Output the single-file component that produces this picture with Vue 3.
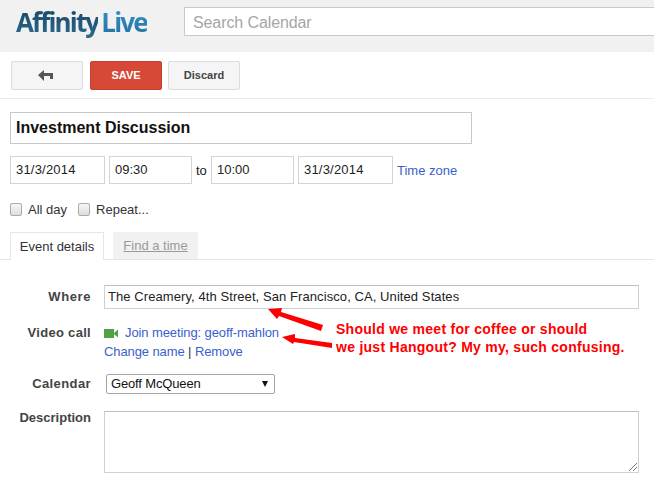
<script setup>
const dates = [
  { cls: 'w95', text: '31/3/2014' },
  { cls: 'w83', text: '09:30' }
]
const dates2 = [
  { cls: 'w83', text: '10:00' },
  { cls: 'w95', text: '31/3/2014' }
]
</script>

<template>
  <div class="page">
    <header class="top">
      <div class="logo"><span class="aff">Affinity</span><span class="live">Live</span></div>
      <div class="search">Search Calendar</div>
    </header>

    <div class="toolbar">
      <button class="btn back" aria-label="Back">
        <svg width="15" height="11" viewBox="0 0 15 11"><path d="M0 5 L6 0 V3 H15 V9 H12 V6 H6 V11 Z" fill="#555" /></svg>
      </button>
      <button class="btn save">SAVE</button>
      <button class="btn discard">Discard</button>
    </div>

    <div class="main">
      <div class="title">Investment Discussion</div>

      <div class="when">
        <div v-for="d in dates" :key="d.text" class="field" :class="d.cls">{{ d.text }}</div>
        <span class="to">to</span>
        <div v-for="d in dates2" :key="d.text" class="field" :class="d.cls">{{ d.text }}</div>
        <a class="link tz">Time zone</a>
      </div>

      <div class="checks">
        <label class="check"><span class="box"></span>All day</label>
        <label class="check"><span class="box"></span>Repeat...</label>
      </div>

      <div class="tabs">
        <div class="tab active">Event details</div>
        <div class="tab idle">Find a time</div>
      </div>

      <div class="form">
        <div class="row where">
          <div class="label">Where</div>
          <div class="field wide">The Creamery, 4th Street, San Francisco, CA, United States</div>
        </div>
        <div class="row video">
          <div class="label">Video call</div>
          <div class="video-info">
            <div class="join">
              <svg width="15" height="9" viewBox="0 0 15 9"><rect x="0" y="0" width="10" height="9" fill="#4fa345" /><path d="M10 4 L14 0.5 V8.5 L10 5 Z" fill="#4fa345" /></svg>
              <a class="link">Join meeting: geoff-mahlon</a>
            </div>
            <div class="manage"><a class="link">Change name</a> | <a class="link">Remove</a></div>
          </div>
        </div>
        <div class="row cal">
          <div class="label">Calendar</div>
          <div class="select"><span>Geoff McQueen</span><i class="caret"></i></div>
        </div>
        <div class="row desc">
          <div class="label">Description</div>
          <div class="area">
            <svg class="grip" width="8" height="8" viewBox="0 0 8 8"><path d="M0 8 L8 0 M4 8 L8 4" stroke="#777" stroke-width="1" /></svg>
          </div>
        </div>
      </div>
    </div>

    <svg class="arrows" width="654" height="486" viewBox="0 0 654 486">
      <path d="M268 309 L282 308 L281 312 L323 325 L321 331 L279 316 L277 319 Z" fill="#fe0000" />
      <path d="M282 337 L295 334 L295 338 L332 343 L332 348 L294 342 L293 344 Z" fill="#fe0000" />
    </svg>
    <div class="note">Should we meet for coffee or should<br />we just Hangout? My my, such confusing.</div>
  </div>
</template>

<style>
html, body { margin: 0; padding: 0; background: #fff; }
</style>

<style scoped>
.page {
  position: relative;
  width: 654px;
  height: 486px;
  overflow: hidden;
  background: #fff;
  font-family: "Liberation Sans", Arial, sans-serif;
  font-size: 13px;
  color: #222;
}
.top {
  height: 52px;
  background: #f1f1f1;
  display: flex;
  align-items: flex-start;
  box-sizing: border-box;
  padding: 7px 0 0 16px;
}
.logo {
  width: 168px;
  margin-top: -2px;
  font-family: "Open Sans", sans-serif;
  font-weight: 700;
  font-size: 26px;
  line-height: 34px;
  letter-spacing: -1.85px;
}
.aff {
  margin-right: 3px;
  background: linear-gradient(#17425e, #2b6d92);
  -webkit-background-clip: text;
  background-clip: text;
  color: transparent;
}
.live {
  background: linear-gradient(#3a94cc, #1f6f9f);
  -webkit-background-clip: text;
  background-clip: text;
  color: transparent;
}
.search {
  flex: 1;
  height: 29px;
  box-sizing: border-box;
  border: 1px solid #c8c8c8;
  border-right: 0;
  background: #fff;
  padding-left: 8px;
  font-size: 16px;
  letter-spacing: -0.1px;
  line-height: 29px;
  color: #a6a6a6;
}
.toolbar {
  height: 47px;
  box-sizing: border-box;
  padding: 9px 0 0 11px;
  display: flex;
  gap: 6px;
  align-items: flex-start;
  border-bottom: 1px solid #ebebeb;
}
.btn {
  height: 29px;
  box-sizing: border-box;
  border-radius: 2px;
  padding: 0 0 2px;
  font-family: inherit;
  font-size: 11px;
  font-weight: 700;
  display: flex;
  align-items: center;
  justify-content: center;
}
.back, .discard {
  width: 72px;
  border: 1px solid #dcdcdc;
  background: #f5f5f5;
  color: #444;
}
.back { margin-right: 1px; padding: 0 3px 0 0; }
.save {
  width: 72px;
  border: 1px solid #c5402f;
  background: #d64937;
  color: #fff;
}
.main { padding: 13px 0 0 10px; }
.title {
  width: 462px;
  height: 32px;
  box-sizing: border-box;
  border: 1px solid #c8c8c8;
  padding-left: 5px;
  font-size: 16px;
  font-weight: 700;
  line-height: 29px;
  color: #111;
}
.when {
  margin-top: 12px;
  display: flex;
  align-items: center;
  gap: 4px;
}
.field {
  height: 28px;
  box-sizing: border-box;
  border: 1px solid #d4d4d4;
  padding-left: 5px;
  line-height: 26px;
  color: #222;
}
.w95 { width: 95px; letter-spacing: 0.2px; }
.w83 { width: 83px; }
.to { width: 11px; color: #222; }
.link { color: #3a5fcd; }
.checks {
  margin-top: 18px;
  display: flex;
  gap: 11px;
  height: 14px;
}
.check {
  display: flex;
  align-items: center;
  color: #333;
}
.box {
  width: 10px;
  height: 11px;
  border: 1px solid #aaa;
  border-radius: 2px;
  background: linear-gradient(#f6f6f6, #dedede);
  margin-right: 6px;
}
.tabs {
  margin: 16px 0 0 -10px;
  padding-left: 10px;
  height: 28px;
  box-sizing: border-box;
  display: flex;
  gap: 9px;
  border-bottom: 1px solid #e6e6e6;
}
.tab {
  height: 28px;
  box-sizing: border-box;
  line-height: 27px;
  text-align: center;
}
.active {
  width: 94px;
  background: #fff;
  border: 1px solid #e6e6e6;
  border-bottom: 0;
  color: #333;
}
.idle {
  width: 85px;
  height: 27px;
  background: #f1f1f1;
  color: #999;
  text-decoration: underline;
}
.form { margin-left: -10px; padding-top: 25px; }
.row { display: flex; align-items: flex-start; }
.label {
  width: 91px;
  margin-right: 13px;
  text-align: right;
  font-weight: 700;
  color: #444;
  flex: none;
}
.where .label { line-height: 24px; letter-spacing: 0.6px; }
.wide {
  width: 535px;
  height: 24px;
  line-height: 22px;
  padding-left: 3px;
  letter-spacing: 0.08px;
  border-color: #d0d0d0;
  border-top-color: #c0c0c0;
}
.video { margin-top: 16px; }
.video .label { line-height: 16px; letter-spacing: 0.3px; }
.video-info { line-height: 16px; letter-spacing: -0.1px; color: #333; }
.join { display: flex; align-items: center; gap: 6px; height: 16px; }
.manage { margin-top: 3px; }
.cal { margin-top: 14px; }
.cal .label { line-height: 20px; letter-spacing: 0.4px; }
.select {
  margin-left: 2px;
  width: 169px;
  height: 20px;
  box-sizing: border-box;
  border: 1px solid #a6a6a6;
  border-radius: 2px;
  padding-left: 4px;
  letter-spacing: -0.15px;
  line-height: 18px;
  color: #111;
  display: flex;
  align-items: center;
  justify-content: space-between;
}
.caret {
  width: 0;
  height: 0;
  border-left: 3.5px solid transparent;
  border-right: 3.5px solid transparent;
  border-top: 6px solid #111;
  margin-right: 6px;
}
.desc { margin-top: 17px; }
.desc .label { line-height: 14px; }
.area {
  position: relative;
  width: 535px;
  height: 62px;
  box-sizing: border-box;
  border: 1px solid #d0d0d0;
  border-top-color: #c0c0c0;
}
.grip { position: absolute; right: 1px; bottom: 1px; }
.arrows { position: absolute; left: 0; top: 0; pointer-events: none; }
.note {
  position: absolute;
  left: 336px;
  top: 320px;
  font-size: 14px;
  font-weight: 700;
  letter-spacing: 0.27px;
  line-height: 18px;
  color: #fe0000;
  white-space: nowrap;
}
</style>
